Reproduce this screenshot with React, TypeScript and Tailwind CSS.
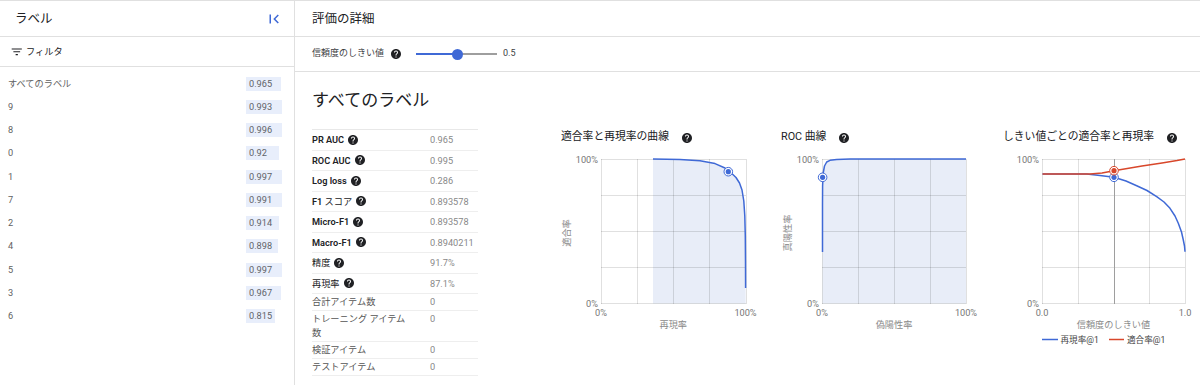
import React from 'react'

const labels: [string, number][] = [
  ['すべてのラベル', 0.965],
  ['9', 0.993],
  ['8', 0.996],
  ['0', 0.92],
  ['1', 0.997],
  ['7', 0.991],
  ['2', 0.914],
  ['4', 0.898],
  ['5', 0.997],
  ['3', 0.967],
  ['6', 0.815],
]

type Metric = { label: React.ReactNode; value: string; help?: boolean }

const metrics: Metric[] = [
  { label: <span className="font-semibold text-[#202124]">PR AUC</span>, value: '0.965', help: true },
  { label: <span className="font-semibold text-[#202124]">ROC AUC</span>, value: '0.995', help: true },
  { label: <span className="font-semibold text-[#202124]">Log loss</span>, value: '0.286', help: true },
  {
    label: (
      <span className="text-[#202124]">
        <span className="font-semibold">F1</span> スコア
      </span>
    ),
    value: '0.893578',
    help: true,
  },
  { label: <span className="font-semibold text-[#202124]">Micro-F1</span>, value: '0.893578', help: true },
  { label: <span className="font-semibold text-[#202124]">Macro-F1</span>, value: '0.8940211', help: true },
  { label: <span className="text-[#202124]">精度</span>, value: '91.7%', help: true },
  { label: <span className="text-[#202124]">再現率</span>, value: '87.1%', help: true },
  { label: '合計アイテム数', value: '0' },
  { label: 'トレーニング アイテム数', value: '0' },
  { label: '検証アイテム', value: '0' },
  { label: 'テストアイテム', value: '0' },
]

function HelpIcon({ className = '' }: { className?: string }) {
  return (
    <svg viewBox="0 0 24 24" className={`h-[12px] w-[12px] shrink-0 ${className}`} fill="#202124">
      <path d="M12 2C6.48 2 2 6.48 2 12s4.48 10 10 10 10-4.48 10-10S17.52 2 12 2zm1 17h-2v-2h2v2zm2.07-7.75l-.9.92C13.45 12.9 13 13.5 13 15h-2v-.5c0-1.1.45-2.1 1.170-2.83l1.24-1.26c.37-.36.59-.86.59-1.41 0-1.1-.9-2-2-2s-2 .9-2 2H8c0-2.21 1.79-4 4-4s4 1.79 4 4c0 .88-.36 1.68-.93 2.25z" />
    </svg>
  )
}

// plot is 144px square, top at y=13 inside the svg
const T = 13
const B = 157
const rows = [13, 49, 85, 121, 157]

function Grid({ L, R }: { L: number; R: number }) {
  const step = (R - L) / 4
  return (
    <g stroke="#000" strokeOpacity={0.12} strokeWidth={1} shapeRendering="crispEdges">
      {rows.map((y) => (
        <line key={`h${y}`} x1={L} x2={R} y1={y + 0.5} y2={y + 0.5} />
      ))}
      {[0, 1, 2, 3, 4].map((i) => (
        <line key={`v${i}`} x1={L + i * step + 0.5} x2={L + i * step + 0.5} y1={T} y2={B + 1} />
      ))}
    </g>
  )
}

function Axes({ L, R, xl, yl, x0, x1 }: { L: number; R: number; xl: string; yl: string; x0: string; x1: string }) {
  const mid = (L + R) / 2
  return (
    <g fontSize="9.2" fill="#757575">
      <text x={L - 3} y={T + 3.5} textAnchor="end">100%</text>
      <text x={L - 3} y={B + 3.5} textAnchor="end">0%</text>
      <text x={L} y={170} textAnchor="middle">{x0}</text>
      <text x={R} y={170} textAnchor="middle">{x1}</text>
      <text x={mid} y={181.5} textAnchor="middle" fill="#8a8a8a">{xl}</text>
      {yl && (
        <text x={L - 33} y={87} textAnchor="middle" fill="#8a8a8a" transform={`rotate(-90 ${L - 33} 87)`} dominantBaseline="middle">
          {yl}
        </text>
      )}
    </g>
  )
}

function Marker({ x, y, color }: { x: number; y: number; color: string }) {
  return (
    <g>
      <circle cx={x} cy={y} r={4.3} fill="#fff" stroke={color} strokeWidth={1} />
      <circle cx={x} cy={y} r={2.6} fill={color} />
    </g>
  )
}

const BLUE = '#3f69d6'
const RED = '#d8472b'

function PrChart() {
  const L = 41
  const R = 185.5
  const pts = '93,13 120,13.4 140,14.8 155,17.6 165,22 171,26.8 176,31.5 179.5,37 182,44 183.8,55 184.8,70 185.3,90 185.5,115 185.6,142'
  return (
    <svg width="200" height="205" className="block overflow-visible">
      <polygon points={`${pts} 185.6,${B + 0.5} 93,${B + 0.5}`} fill="#e8edf8" />
      <Grid L={L} R={R} />
      <Axes L={L} R={R} xl="再現率" yl="適合率" x0="0%" x1="100%" />
      <polyline points={pts} fill="none" stroke={BLUE} strokeWidth={1.5} strokeLinejoin="round" />
      <Marker x={168.3} y={25.7} color={BLUE} />
    </svg>
  )
}

function RocChart() {
  const L = 42
  const R = 186
  const pts = '42.5,106 42.5,60 42.6,40 43.2,27 44.5,20 46.7,16 50,14.3 56.7,13.4 70,13 186,13'
  return (
    <svg width="200" height="205" className="block overflow-visible">
      <polygon points={`${pts} 186,${B + 0.5} 42.5,${B + 0.5}`} fill="#e8edf8" />
      <Grid L={L} R={R} />
      <Axes L={L} R={R} xl="偽陽性率" yl="真陽性率" x0="0%" x1="100%" />
      <polyline points={pts} fill="none" stroke={BLUE} strokeWidth={1.5} strokeLinejoin="round" />
      <Marker x={42.6} y={31.3} color={BLUE} />
    </svg>
  )
}

function ThresholdChart() {
  const L = 40
  const R = 183
  const red = '40.5,28 88,28 100,27 112,24.7 140,20 160,17 175,14.6 183,13'
  const blue = '40.5,28 84.7,28 98,29.5 112,31.3 124,35 134.7,39.7 145,44.5 154.7,50.7 162,56 168,62.3 173,70 176.3,77.3 179.5,86 181.3,94 182.5,100 183,105.7'
  return (
    <svg width="196" height="205" className="block overflow-visible">
      <Grid L={L} R={R} />
      <line x1={112.5} x2={112.5} y1={T} y2={B + 1} stroke="#9e9e9e" strokeWidth={1} shapeRendering="crispEdges" />
      <Axes L={L} R={R} xl="信頼度のしきい値" yl="" x0="0.0" x1="1.0" />
      <polyline points={blue} fill="none" stroke={BLUE} strokeWidth={1.5} strokeLinejoin="round" />
      <polyline points={red} fill="none" stroke={RED} strokeWidth={1.5} strokeLinejoin="round" />
      <Marker x={112} y={31.3} color={BLUE} />
      <Marker x={112} y={24.7} color={RED} />
      <g fontSize="8.6" fill="#424242">
        <line x1={40} x2={56} y1={193.5} y2={193.5} stroke={BLUE} strokeWidth={1.5} />
        <text x={58.5} y={196.5}>再現率@1</text>
        <line x1={107} x2={122} y1={193.5} y2={193.5} stroke={RED} strokeWidth={1.5} />
        <text x={125} y={196.5}>適合率@1</text>
      </g>
    </svg>
  )
}

function ChartBlock({ title, width, children }: { title: string; width: string; children: React.ReactNode }) {
  return (
    <div className={`shrink-0 ${width}`}>
      <div className="flex h-[17px] items-center pl-[1px] text-[10.8px] text-[#202124]">
        <span>{title}</span>
        <HelpIcon className="ml-[12px]" />
      </div>
      {children}
    </div>
  )
}

export default function App() {
  return (
    <div className="flex h-[385px] w-[1200px] overflow-hidden border-t border-[#e0e0e0] bg-white font-['Roboto','Noto_Sans_CJK_JP',sans-serif]">
      {/* sidebar */}
      <aside className="flex w-[295px] shrink-0 flex-col border-r border-[#e0e0e0]">
        <div className="flex h-[36px] shrink-0 items-center justify-between border-b border-[#e0e0e0] pt-[1px] pl-[15px] pr-[11px]">
          <span className="text-[12.5px] text-[#202124]">ラベル</span>
          <svg viewBox="0 0 24 24" className="h-[18px] w-[18px]" fill="#3f69d6">
            <path d="M18.41 16.59L13.82 12l4.59-4.59L17 6l-6 6 6 6zM6 6h2v12H6z" />
          </svg>
        </div>
        <div className="flex h-[30px] shrink-0 items-center border-b border-[#e0e0e0] pl-[10px]">
          <svg viewBox="0 0 24 24" className="h-[13.5px] w-[13.5px]" fill="#202124">
            <path d="M10 18h4v-2h-4v2zM3 6v2h18V6H3zm3 7h12v-2H6v2z" />
          </svg>
          <span className="ml-[2.5px] text-[9.2px] text-[#202124]">フィルタ</span>
        </div>
        <div className="pt-[5px]">
          {labels.map(([name, v]) => (
            <div key={name} className="flex h-[23.25px] items-center pl-[8px] pr-[12px] text-[9.2px]">
              <span className="flex-1 text-[#616161]">{name}</span>
              <div className="w-[36px]">
                <div
                  className="h-[14px] whitespace-nowrap bg-[#e8eefb] pl-[3px] leading-[14px] text-[#5f6368]"
                  style={{ width: `${Math.round(36 * v)}px` }}
                >
                  {v}
                </div>
              </div>
            </div>
          ))}
        </div>
      </aside>

      {/* main */}
      <main className="flex min-w-0 flex-1 flex-col">
        <div className="flex h-[36px] shrink-0 items-center border-b border-[#e0e0e0] pt-[1px] pl-[17px]">
          <span className="text-[12.5px] text-[#202124]">評価の詳細</span>
        </div>
        <div className="flex h-[35px] shrink-0 items-center border-b border-[#e0e0e0] pl-[17px] text-[9px] text-[#3c4043]">
          <span className="w-[78px] whitespace-nowrap">信頼度のしきい値</span>
          <HelpIcon />
          <div className="relative ml-[14px] flex h-[2px] w-[81px] items-center bg-[#9e9e9e]">
            <div className="h-[2px] w-[41px] bg-[#3f69d6]" />
            <div className="absolute left-[36px] top-[-4.5px] h-[11px] w-[11px] rounded-full bg-[#3f69d6]" />
          </div>
          <span className="ml-[6px] text-[9px] text-[#3c4043]">0.5</span>
        </div>

        <div className="shrink-0 px-[17px]">
          <h1 className="pt-[18px] text-[17px] leading-[20px] font-normal text-[#202124]">すべてのラベル</h1>
          <div className="mt-[19px] flex">
            <div className="w-[166px] shrink-0 border-t border-[#e8e8e8] text-[9.2px]">
              {metrics.map((m, i) => (
                <div
                  key={i}
                  className={`flex border-b border-[#eeeeee] ${m.help ? 'py-[2.25px] leading-[15px]' : 'py-[1px] leading-[14px]'}`}
                >
                  <div className="flex w-[118px] shrink-0 items-start pr-[16px] text-[#555]">
                    <span>{m.label}</span>
                    {m.help && <HelpIcon className="ml-[3px] mt-[1.5px]" />}
                  </div>
                  <div className="flex-1 text-[#888]">{m.value}</div>
                </div>
              ))}
            </div>

            <div className="ml-[82px] flex">
              <ChartBlock title="適合率と再現率の曲線" width="w-[220px]">
                <PrChart />
              </ChartBlock>
              <ChartBlock title="ROC 曲線" width="w-[222px]">
                <RocChart />
              </ChartBlock>
              <ChartBlock title="しきい値ごとの適合率と再現率" width="w-[181px]">
                <ThresholdChart />
              </ChartBlock>
            </div>
          </div>
        </div>
      </main>
    </div>
  )
}
